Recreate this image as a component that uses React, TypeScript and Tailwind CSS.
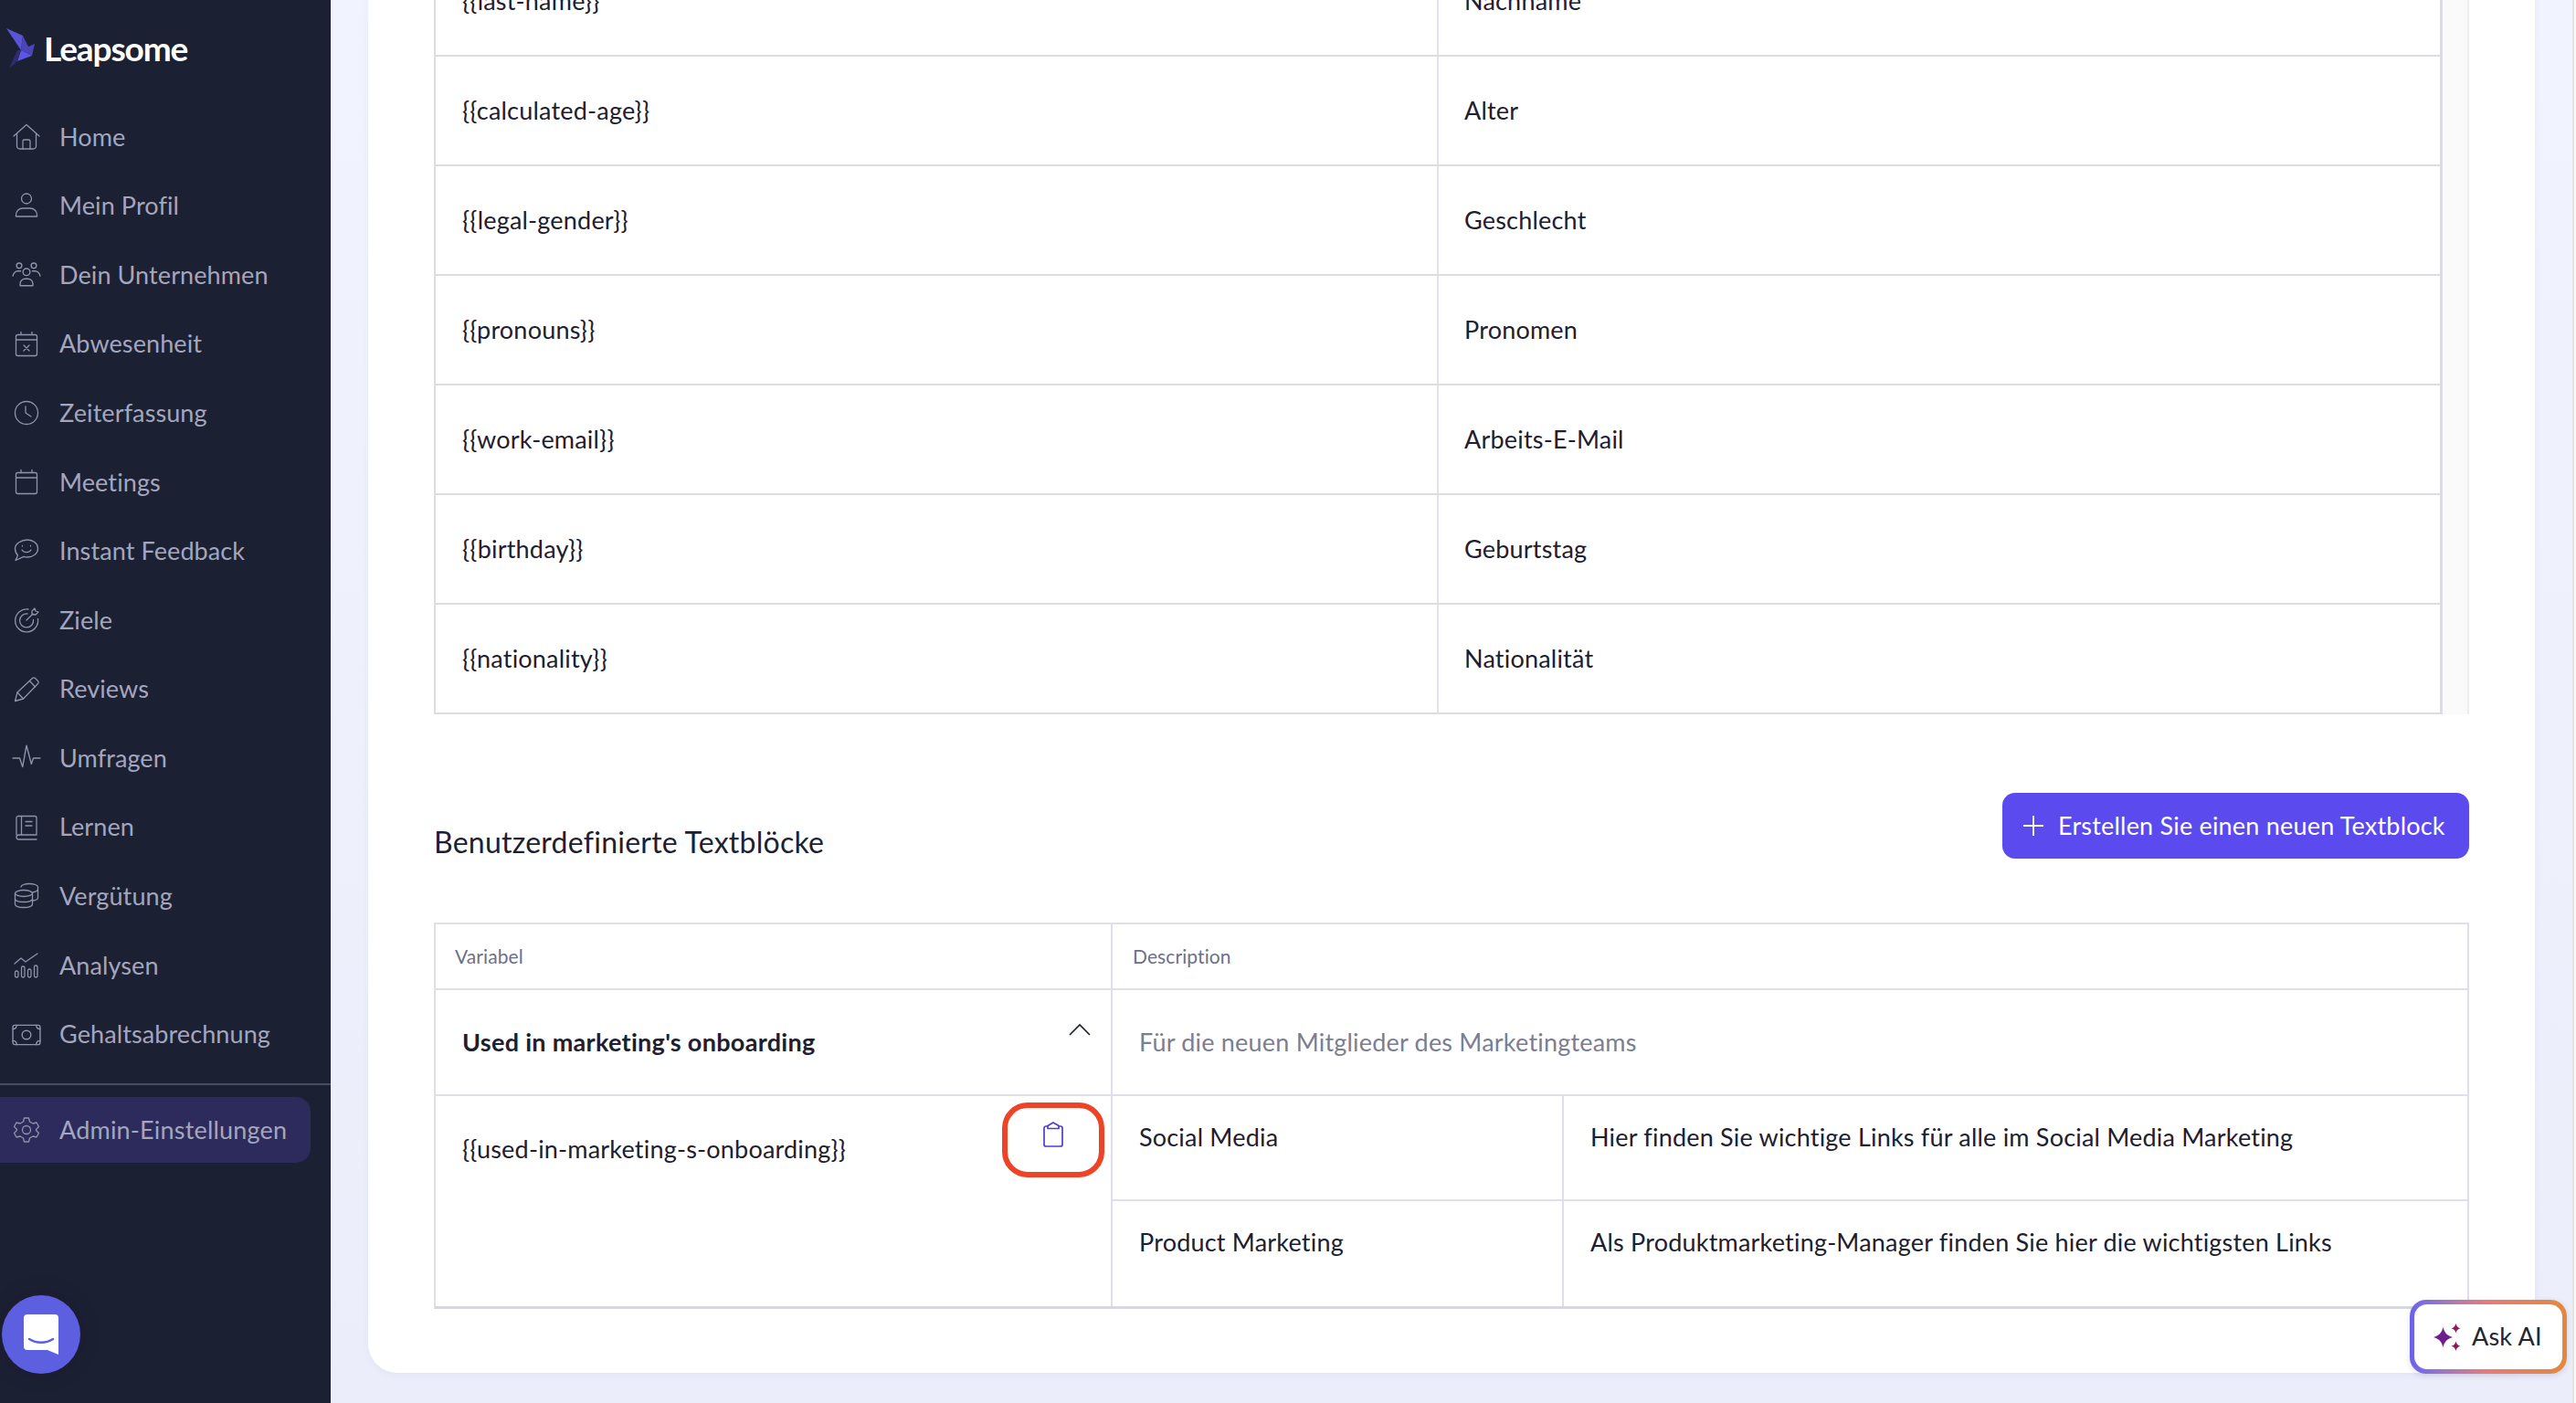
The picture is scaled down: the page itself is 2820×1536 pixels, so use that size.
import type { ReactNode } from "react";

const Svg = ({ children, w = 30 }: { children: ReactNode; w?: number }) => (
  <svg width={w} height={w} viewBox="0 0 30 30" fill="none" stroke="#8f93ac" strokeWidth="1.3" strokeLinecap="round" strokeLinejoin="round">
    {children}
  </svg>
);

const navItems: { label: string; icon: ReactNode }[] = [
  {
    label: "Home",
    icon: (
      <Svg>
        <path d="M1 14 15 1.500 29 14M4.500 11.500v13.500a3 3 0 0 0 3 3h15a3 3 0 0 0 3-3V11.500" />
        <path d="M11 28v-8.500a1.500 1.500 0 0 1 1.500-1.500h5a1.500 1.500 0 0 1 1.500 1.500V28" />
      </Svg>
    ),
  },
  {
    label: "Mein Profil",
    icon: (
      <Svg>
        <circle cx="15" cy="7.500" r="5.500" />
        <path d="M3.500 27v-1.500c0-4.500 3.500-7.500 7.500-7.500h8c4 0 7.500 3 7.500 7.500V27z" />
      </Svg>
    ),
  },
  {
    label: "Dein Unternehmen",
    icon: (
      <Svg w={34}>
        <circle cx="15" cy="12" r="3.600" />
        <circle cx="7.500" cy="5.500" r="2.700" />
        <circle cx="22.500" cy="5.500" r="2.700" />
        <path d="M8.500 26v-2c0-3 2.500-5 5-5h3c2.500 0 5 2 5 5v2zM1 16c.5-3 3-5 5-5h3M29 16c-.5-3-3-5-5-5h-3" />
      </Svg>
    ),
  },
  {
    label: "Abwesenheit",
    icon: (
      <Svg>
        <rect x="3.500" y="4.500" width="23" height="23" rx="2" />
        <path d="M3.500 10h23M9 1.500v3M21 1.500v3M12 16l6 6M18 16l-6 6" />
      </Svg>
    ),
  },
  {
    label: "Zeiterfassung",
    icon: (
      <Svg>
        <circle cx="15" cy="15" r="12.500" />
        <path d="M14 8v7l6 4" />
      </Svg>
    ),
  },
  {
    label: "Meetings",
    icon: (
      <Svg>
        <rect x="3.500" y="4.500" width="23" height="23" rx="2" />
        <path d="M3.500 10h23M9 1.500v3M21 1.500v3" />
      </Svg>
    ),
  },
  {
    label: "Instant Feedback",
    icon: (
      <Svg>
        <path d="M16 3c6.500 0 11.500 4 11.500 9.500S22.500 22 16 22c-1.500 0-3-.2-4-.6L3 25.500l2.500-5.500C3.500 18 2.500 15.500 2.500 12.500 2.500 7 9.500 3 16 3z" />
        <path d="M10 14c2 3.500 8 3.500 10 0M10.500 9.500v.5M19.500 9.500v.5" />
      </Svg>
    ),
  },
  {
    label: "Ziele",
    icon: (
      <Svg>
        <path d="M17 3a12.500 12.500 0 1 0 10.500 10.500" />
        <path d="M16 8a7.500 7.500 0 1 0 6.500 6.500" />
        <path d="M15 15l7-7M21 5l3-3 1 3 3 1-3 3-4-.5z" />
      </Svg>
    ),
  },
  {
    label: "Reviews",
    icon: (
      <Svg>
        <path d="M2.500 27.500 5 18 21.500 2.500a2 2 0 0 1 3 0l3 3a2 2 0 0 1 0 3L11.500 25z" />
        <path d="M5 18l6.500 7M18.500 5.500l6 6.500" />
      </Svg>
    ),
  },
  {
    label: "Umfragen",
    icon: (
      <Svg w={34}>
        <path d="M1 15h7l3 9 4-22 5 19 2-6h7" />
      </Svg>
    ),
  },
  {
    label: "Lernen",
    icon: (
      <Svg>
        <path d="M4 23V4.500a2 2 0 0 1 2-2h18a2 2 0 0 1 2 2V23H6.500a2.500 2.500 0 0 0 0 5H26M9.500 2.500V23M14 8.500h7M14 13h7" />
      </Svg>
    ),
  },
  {
    label: "Vergütung",
    icon: (
      <Svg>
        <ellipse cx="12" cy="12" rx="9.500" ry="3.500" />
        <path d="M2.500 12v12c0 2 4 3.500 9.500 3.500s9.500-1.500 9.500-3.500V12M2.500 18c0 2 4 3.500 9.500 3.500s9.500-1.500 9.500-3.500" />
        <path d="M9 5c0-2 4-3.500 9-3.500S27.500 3 27.500 5v12c0 1-1.500 2.500-6 3M21.500 11c3.500-.5 6-2 6-4" />
      </Svg>
    ),
  },
  {
    label: "Analysen",
    icon: (
      <Svg>
        <path d="M2 13 9 7l5 4 13-9" />
        <rect x="2.500" y="21" width="3.500" height="7" rx="1.700" />
        <rect x="9.500" y="16" width="3.500" height="12" rx="1.700" />
        <rect x="16.500" y="19" width="3.500" height="9" rx="1.700" />
        <rect x="23.500" y="15" width="3.500" height="13" rx="1.700" />
      </Svg>
    ),
  },
  {
    label: "Gehaltsabrechnung",
    icon: (
      <Svg w={32}>
        <rect x="1" y="5" width="28" height="20" rx="2" />
        <circle cx="15" cy="15" r="4.500" />
        <path d="M1 9c2.500 0 4-1.500 4-4M29 9c-2.500 0-4-1.500-4-4M1 21c2.500 0 4 1.500 4 4M29 21c-2.500 0-4 1.500-4 4" />
      </Svg>
    ),
  },
];

const variables = [
  ["{{last-name}}", "Nachname"],
  ["{{calculated-age}}", "Alter"],
  ["{{legal-gender}}", "Geschlecht"],
  ["{{pronouns}}", "Pronomen"],
  ["{{work-email}}", "Arbeits-E-Mail"],
  ["{{birthday}}", "Geburtstag"],
  ["{{nationality}}", "Nationalität"],
];

const blocks = [
  ["Social Media", "Hier finden Sie wichtige Links für alle im Social Media Marketing"],
  ["Product Marketing", "Als Produktmarketing-Manager finden Sie hier die wichtigsten Links"],
];

function Sidebar() {
  return (
    <aside className="relative w-[362px] shrink-0 bg-[#1c2033] text-[#a3a6bd]">
      <div className="flex h-[112px] items-start pl-[7px] pt-[31px]">
        <svg width="32" height="44" viewBox="0 0 32 44">
          <path d="M0 0 18 8 16 24z" fill="#5a55d8" />
          <path d="M18 8 24 20 31 17 28 30 16 24z" fill="#4a45b8" />
          <path d="M16 24 28 30 12 36z" fill="#5d57e6" />
          <path d="M12 24 16 24 12 36 3 44z" fill="#2f2c72" />
        </svg>
        <span className="ml-[9px] mt-[-1px] text-[37px] font-bold leading-[46px] tracking-[-1.1px] text-white">Leapsome</span>
      </div>
      <nav>
        {navItems.map((item) => (
          <div key={item.label} className="flex h-[75.6px] items-center pl-[13px]">
            <span className="flex w-[32px] items-center justify-center">{item.icon}</span>
            <span className="ml-[20px] tracking-[0.1px]">{item.label}</span>
          </div>
        ))}
      </nav>
      <div className="mt-[16px] h-[2px] bg-[#4a4d60]" />
      <div className="mt-[13px] flex h-[72px] w-[340px] items-center rounded-r-[16px] bg-[#2d2b5c] pl-[13px]">
        <span className="flex w-[32px] items-center justify-center">
          <Svg>
            <circle cx="15" cy="15" r="4.500" />
            <path d="M12.500 2h5l1 4 3.500 2 4-1 2.500 4.500-3 3v1l3 3L26 23l-4-1-3.500 2-1 4h-5l-1-4L8 22l-4 1-2.500-4.500 3-3v-1l-3-3L4 7l4 1 3.500-2z" />
          </Svg>
        </span>
        <span className="ml-[20px]">Admin-Einstellungen</span>
      </div>
      <div className="absolute left-[2px] top-[1418px] flex h-[86px] w-[86px] items-center justify-center rounded-full bg-[#5c5fe0] shadow-[0_0_24px_rgba(0,0,0,0.15)]">
        <svg width="38" height="44" viewBox="0 0 38 44">
          <path d="M4 0h30a4 4 0 0 1 4 4v40l-12-5H4a4 4 0 0 1-4-4V4a4 4 0 0 1 4-4z" fill="#fff" />
          <path d="M6 27c8 5 18 5 26 0" fill="none" stroke="#5c5fe0" strokeWidth="2.500" strokeLinecap="round" />
        </svg>
      </div>
    </aside>
  );
}

function VariablesTable() {
  return (
    <div className="flex">
      <div className="w-[2200px] border-l-2 border-r-[3px] border-[#dcdde4]">
        {variables.map(([name, label]) => (
          <div key={name} className="flex h-[120px] items-center border-b-2 border-[#dcdde4]">
            <div className="flex h-full w-[1098px] items-center border-r-2 border-[#e2e3e9] pl-[29px]">{name}</div>
            <div className="pl-[28px]">{label}</div>
          </div>
        ))}
      </div>
      <div className="w-[29px] border-r-2 border-[#eeeeee] bg-[#fafafa]" />
    </div>
  );
}

function BlocksTable() {
  return (
    <div className="mt-[66px] border-2 border-[#dfe0e7] border-b-[3px] border-b-[#d6d8de]">
      <div className="flex h-[72px] border-b-2 border-[#dfe0e7] text-[21px] tracking-[0.1px] text-[#6d7088]">
        <div className="flex w-[741px] items-center border-r-2 border-[#dfe0e7] pl-[21px]">Variabel</div>
        <div className="flex items-center pl-[22px]">Description</div>
      </div>
      <div className="flex h-[116px] border-b-2 border-[#dfe0e7]">
        <div className="flex w-[741px] items-center justify-between border-r-2 border-[#dfe0e7] pl-[29px] pr-[22px]">
          <span className="font-bold tracking-[0.3px]">Used in marketing's onboarding</span>
          <svg className="mb-[28px]" width="24" height="14" viewBox="0 0 24 14" fill="none" stroke="#1d2030" strokeWidth="1.600">
            <path d="M1 13 12 2l11 11" />
          </svg>
        </div>
        <div className="flex items-center pl-[29px] text-[#7b7e92]">Für die neuen Mitglieder des Marketingteams</div>
      </div>
      <div className="flex">
        <div className="relative w-[741px] border-r-2 border-[#dfe0e7] pl-[29px] pt-[38px]">
          {"{{used-in-marketing-s-onboarding}}"}
          <div className="absolute left-[620px] top-[7px] flex h-[82px] w-[112px] items-start justify-center rounded-[28px] border-[6px] border-[#ee4327] pt-[15px]">
            <svg width="22" height="28" viewBox="0 0 22 28" fill="none" stroke="#4f3fd0" strokeWidth="1.700" strokeLinejoin="round">
              <path d="M5 5H3a2 2 0 0 0-2 2v18a2 2 0 0 0 2 2h16a2 2 0 0 0 2-2V7a2 2 0 0 0-2-2h-2" />
              <path d="M5 7.500V4.500L11 1l6 3.500v3z" />
            </svg>
          </div>
        </div>
        <div className="flex-1">
          {blocks.map(([name, text], i) => (
            <div key={name} className={i === 0 ? "flex h-[115px] border-b-2 border-[#dfe0e7]" : "flex h-[115px]"}>
              <div className="w-[494px] border-r-2 border-[#dfe0e7] pl-[29px] pt-[25px]">{name}</div>
              <div className="pl-[29px] pt-[25px]">{text}</div>
            </div>
          ))}
        </div>
      </div>
    </div>
  );
}

export default function App() {
  return (
    <div className="flex h-[1536px] w-[2820px] overflow-hidden font-['Lato',sans-serif] text-[27px] tracking-[0.2px] text-[#1d2030]">
      <Sidebar />
      <main className="relative flex flex-1 justify-start overflow-hidden bg-gradient-to-b from-[#f1f4fe] to-[#ebedfa]">
        <div className="ml-[41px] mt-[-58px] h-[1561px] w-[2372px] rounded-b-[32px] bg-white px-[72px] shadow-[0_2px_8px_rgba(80,80,160,0.06)]">
          <VariablesTable />
          <div className="mt-[86px] flex items-start justify-between">
            <h2 className="mt-[32px] text-[32px] leading-[44px] tracking-[0.25px]">Benutzerdefinierte Textblöcke</h2>
            <button className="flex h-[72px] w-[511px] items-center rounded-[14px] bg-[#5b4aee] pl-[22px] text-white">
              <svg width="24" height="24" viewBox="0 0 24 24" fill="none" stroke="#fff" strokeWidth="1.800">
                <path d="M12 1v22M1 12h22" />
              </svg>
              <span className="ml-[15px]">Erstellen Sie einen neuen Textblock</span>
            </button>
          </div>
          <BlocksTable />
        </div>
        <div className="absolute bottom-0 right-0 top-0 w-[4px] border-l-2 border-[#e4e4e8] bg-[#fafafa]" />
        <div className="absolute left-[2276px] top-[1423px] rounded-[18px] bg-gradient-to-r from-[#6a62ee] via-[#e87a74] to-[#e08a3c] p-[5px] shadow-[0_2px_6px_rgba(60,60,120,0.15)]">
          <div className="flex h-[71px] w-[162px] items-center rounded-[14px] bg-white pl-[21px]">
            <svg width="30" height="30" viewBox="0 0 30 30">
              <path d="M10.500 4c1.500 6 4 9 10.500 11-6.500 2-9 5-10.500 11C9 20 6.500 17 0 15c6.500-2 9-5 10.500-11z" fill="#6e1f8a" />
              <path d="M24.500 0c.7 2.800 1.700 4.300 5 5.200-3.300.9-4.300 2.400-5 5.200-.7-2.800-1.700-4.300-5-5.200 3.300-.9 4.300-2.400 5-5.200zM24.500 19.500c.7 2.800 1.700 4.300 5 5.200-3.300.9-4.300 2.400-5 5.200-.7-2.800-1.700-4.300-5-5.200 3.300-.9 4.300-2.400 5-5.200z" fill="#8b1d52" />
            </svg>
            <span className="ml-[12px] text-[#23262f]">Ask AI</span>
          </div>
        </div>
      </main>
    </div>
  );
}
